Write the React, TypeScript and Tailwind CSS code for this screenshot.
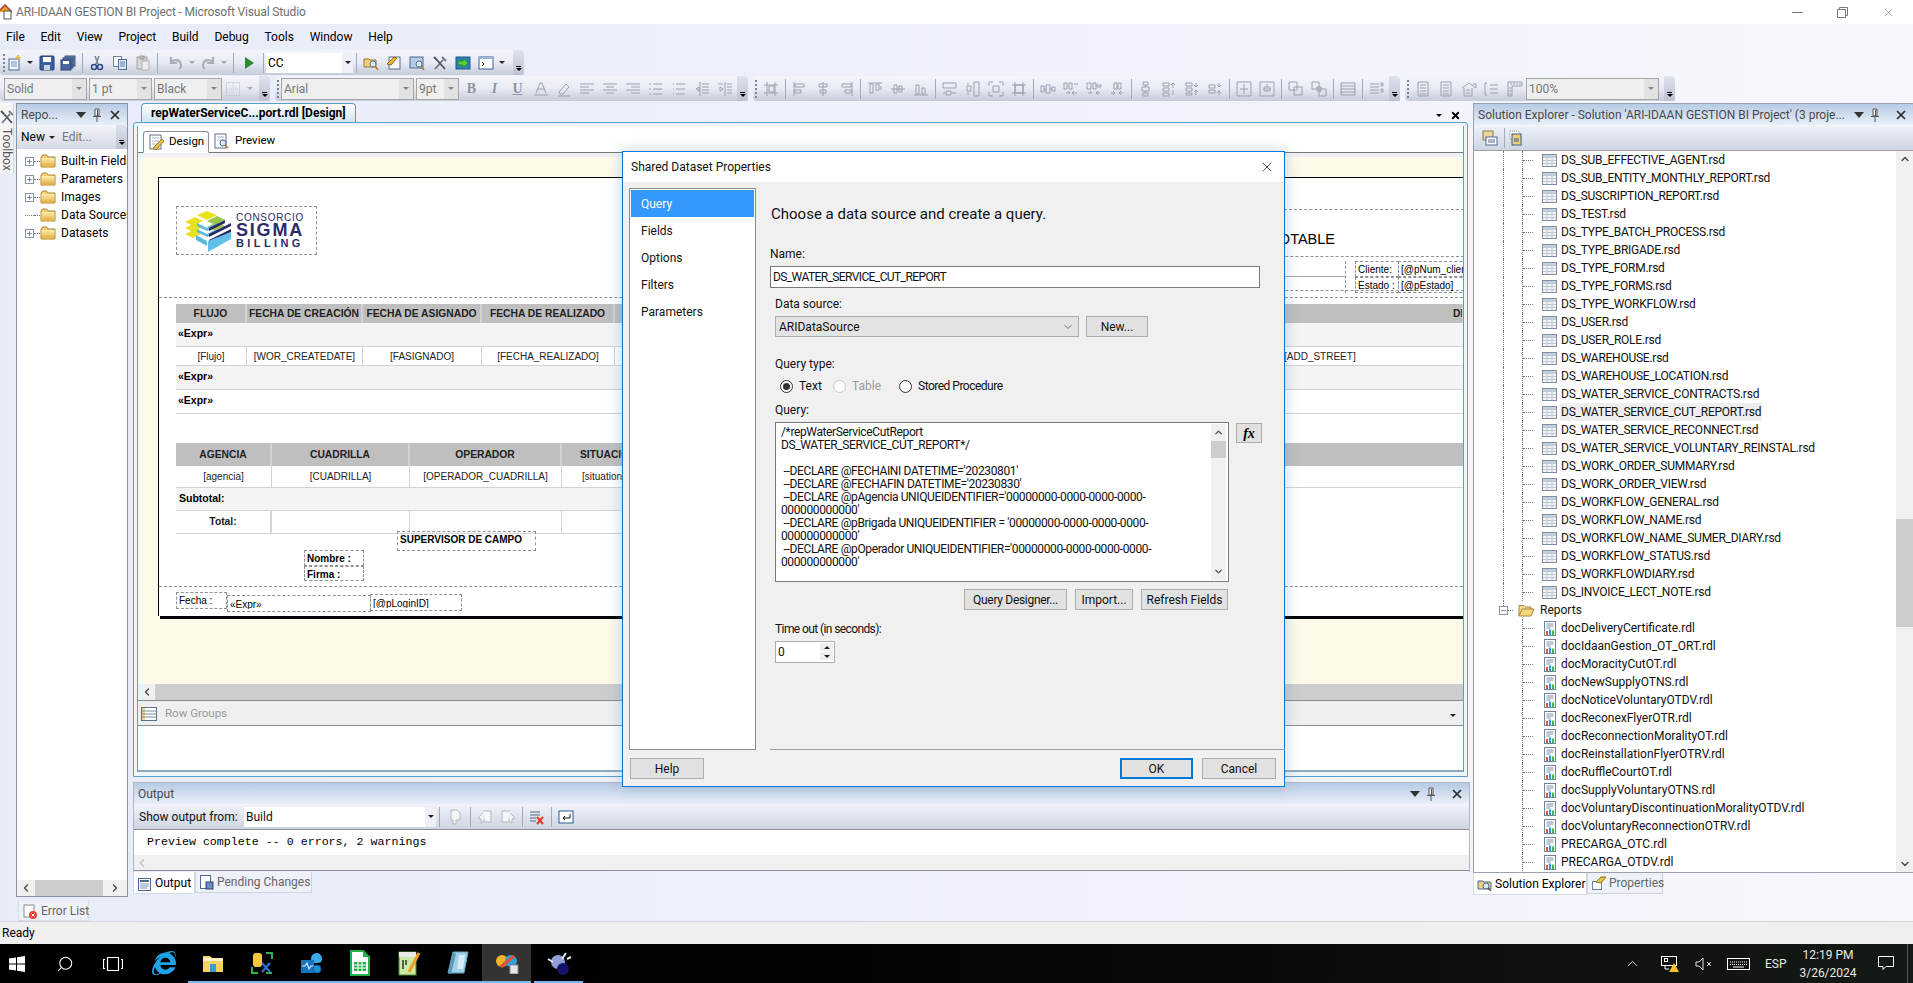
import type { ReactNode } from "react";
import { ChevronUp, ChevronDown, ChevronLeft, ChevronRight, Search, X, Minus, Plus } from "lucide-react";
import { FaInternetExplorer } from "react-icons/fa";

const ui = "font-['Roboto',Arial,sans-serif]";

// ---------- small drawings ----------
const Svg = ({ children, s = 16, w, h, c = "" }: { children: ReactNode; s?: number; w?: number; h?: number; c?: string }) => (
  <svg width={w ?? s} height={h ?? s} viewBox={`0 0 ${w ?? s} ${h ?? s}`} className={"shrink-0 " + c} fill="none">
    {children}
  </svg>
);

const Folder = () => (
  <Svg w={16} h={14}>
    <path d="M1 3.5 2.5 1h4L8 3h7v10H1z" fill="#f3cf72" stroke="#a8853a" />
    <rect x="1.5" y="4" width="13" height="9" fill="url(#fold)" />
    <defs>
      <linearGradient id="fold" x1="0" y1="0" x2="0" y2="1">
        <stop offset="0" stopColor="#fdeeb0" />
        <stop offset="1" stopColor="#e2ab3c" />
      </linearGradient>
    </defs>
  </Svg>
);

const OpenFolder = () => (
  <Svg w={17} h={13}>
    <path d="M1 12V1.5h5L7.5 3H13v2" stroke="#a8853a" fill="#f5dc98" />
    <path d="M1 12 4 5h12l-3 7z" fill="#f8d67c" stroke="#a8853a" />
  </Svg>
);

const RsdIcon = () => (
  <Svg w={15} h={13}>
    <rect x=".5" y=".5" width="14" height="12" fill="#f3f5f8" stroke="#7f8ea3" />
    <path d="M1 3.5h13M1 6.5h13M1 9.5h13M5 3v9M10 3v9" stroke="#bcc6d4" />
    <rect x="1" y="1" width="13" height="2" fill="#c6d1df" />
  </Svg>
);

const RdlIcon = () => (
  <Svg w={13} h={15}>
    <rect x=".5" y=".5" width="11" height="14" fill="#fff" stroke="#6d83a0" />
    <path d="M2.5 3h7M2.5 5h7M2.5 7h4" stroke="#7c8ea8" />
    <rect x="2" y="10" width="2" height="4" fill="#e8502f" />
    <rect x="5" y="8.500" width="2" height="5.500" fill="#2f9bd8" />
    <rect x="8" y="9.500" width="2" height="4.500" fill="#44b649" />
  </Svg>
);

const PlusBox = () => (
  <span className="flex h-[9px] w-[9px] shrink-0 items-center justify-center border border-[#8a94a6] bg-white">
    <Plus size={7} strokeWidth={2} className="text-[#27408b]" />
  </span>
);

const PinIcon = () => (
  <Svg w={10} h={14}>
    <path d="M3 1h4v7H3zM1 8.500h8M5 9v5M5.500 2v6" stroke="#555" fill="#f3f3f3" />
  </Svg>
);

const HeadX = () => <X size={14} strokeWidth={3} className="shrink-0 text-[#2c2c2c]" />;
const Tri = ({ c = "border-t-[#222]" }: { c?: string }) => (
  <span className={"inline-block h-0 w-0 border-x-[3px] border-t-[3px] border-x-transparent " + c} />
);
const BigTri = () => <span className="inline-block h-0 w-0 border-x-[5px] border-t-[6px] border-x-transparent border-t-[#333]" />;

// gray alignment glyphs of the layout toolbar
const grayPaths: Record<string, string> = {
  ulist1: "M1 3h2M1 8h2M1 13h2M5 3h9M5 8h9M5 13h9",
  ulist2: "M2 3h1M2 8h1M2 13h1M5 3h9M5 8h9M5 13h9",
  outdent: "M6 1v14M2 8l3-2v4zM8 3h7M8 6h7M8 9h7M8 12h7",
  indent: "M8 1v14M6 8 3 6v4zM1 3h5M10 3h5M10 6h5M10 9h5M10 12h5",
  grid: "M4 1v14M12 1v14M1 4h14M1 12h14M6 5h5v6H6z",
  left: "M2 1v14M3 3h9v3H3zM3 9h6v3H3z",
  center: "M8 1v14M4 3h8v3H4zM5 9h6v3H5z",
  right: "M14 1v14M4 3h9v3H4zM7 9h6v3H7z",
  top: "M1 2h14M3 3v9h3V3zM9 3v6h3V3zM14 5v4",
  middle: "M1 8h14M4 4h3v8H4zM9 5h3v6H9z",
  bottom: "M1 14h14M3 4v9h3V4zM9 7v6h3V7z",
  w1: "M1 2h13v5H1zM4 10h5v4H4zM1 12h2M10 12h4",
  w2: "M9 1h5v14H9zM2 5h4v5H2zM3 2v2M3 11v3",
  w3: "M1 1h4M11 1h4M1 15h4M11 15h4M1 1v4M15 1v4M1 11v4M15 11v4M5 5h6v6H5z",
  w4: "M4 1v14M12 1v14M1 4h14M1 12h14M4 4h8v8H4z",
  h1: "M1 5h3v6H1zM6 4h4v8H6zM12 6h3v4h-3zM4 8h2M10 8h2",
  h2: "M1 2h3v6H1zM6 2h3v6H6zM11 3h4M3 12h4l-2-2M9 12h5M11 10l-2 2 2 2",
  h3: "M1 2h4v6H1zM7 2h3v6H7zM11 4h4v2h-4zM2 12h4l-2-2M10 12h4M12 10l-2 2 2 2",
  h4: "M5 2h3v6H5zM9 2h3v6H9zM2 12h4M10 12h4M4 10l2 2-2 2M12 10l-2 2 2 2",
  v1: "M5 1h5v3H5zM4 6h7v4H4zM5 12h5v3H5zM7.500 4v2M7.500 10v2",
  v2: "M2 2h6v3H2zM2 7h6v3H2zM2 12h6v3H2zM12 2v5M10 4l2-2 2 2M12 9v5",
  v3: "M2 2h6v3H2zM2 7h6v3H2zM2 12h6v2H2zM12 2v4M10 4l2 2 2-2M12 9v5M10 11l2-2 2 2",
  v4: "M2 4h6v3H2zM2 9h6v3H2zM12 2v4M12 9v5M10 4l2 2 2-2M10 12l2-2 2 2",
  cw: "M1 1h14v14H1zM8 3v10M4 8h8",
  cv: "M1 1h14v14H1zM4 8h8M8 3v3M5 6h6v4H5z",
  front: "M1 1h8v8H1zM6 6h8v8H6z",
  back: "M1 1h7v7H1zM8 8h7v7H8zM6 6h4v4H6z",
  table: "M1 2h14v12H1zM1 5h14M1 8h14M1 11h14",
  tabs: "M1 3h9M1 6h9M1 9h9M1 12h9M12 2h2v3h-2zM12 8h2v3h-2z",
  doc: "M3 1h10v14H3zM5 4h6M5 7h6M5 10h6M5 13h6",
  house: "M1 7 8 2l7 5M3 7v8h8V7M5 9h4M5 12h4M12 3h3v4",
  bracket: "M3 2H1v12h2M6 4h8M6 8h8M6 12h8",
  ruler: "M1 1h14v4H5v10H1zM4 2v2M7 2v2M10 2v2M13 2v2M2 7h2M2 10h2M2 13h2",
  fontA: "M3 12 7 2h2l4 10M5 8h6M1 14h14",
  eraser: "M3 11 10 3l3 3-6 7H4zM2 15h12",
  aLeft: "M1 3h14M1 6h9M1 9h14M1 12h9",
  aCenter: "M1 3h14M4 6h8M1 9h14M4 12h8",
  aRight: "M1 3h14M6 6h9M1 9h14M6 12h9",
};

const Gray = ({ n, c = "#9aa1ae" }: { n: string; c?: string }) => (
  <Svg>
    <path d={grayPaths[n]} stroke={c} />
  </Svg>
);

// ---------- toolbar bits ----------
const Btn = ({ children, w = "w-[23px]" }: { children: ReactNode; w?: string }) => (
  <span className={"flex h-full shrink-0 items-center justify-center " + w}>{children}</span>
);
const G = ({ n }: { n: string }) => (
  <Btn>
    <Gray n={n} />
  </Btn>
);
const Sep = () => (
  <span className="flex h-full w-[6px] shrink-0 items-center justify-center">
    <span className="h-[20px] w-px bg-[#a3a9b7]" />
  </span>
);
const Grip = () => (
  <span className="flex h-full w-[6px] shrink-0 flex-col items-center justify-center gap-[2px]">
    {[0, 1, 2, 3, 4].map((i) => (
      <span key={i} className="h-[2px] w-[2px] bg-[#7b8294]" />
    ))}
  </span>
);
const Overflow = () => (
  <span className="ml-auto flex h-full w-[11px] shrink-0 flex-col items-center justify-end gap-[1px] rounded-r bg-gradient-to-b from-[#dfe3ee] to-[#bcc2d2] pb-[4px]">
    <span className="h-px w-[5px] bg-black" />
    <Tri c="border-t-black" />
  </span>
);
const Band = ({ children, w }: { children: ReactNode; w: string }) => (
  <div className={"flex h-full shrink-0 items-center rounded-l-sm bg-gradient-to-b from-[#f3f5fb] via-[#e8ebf4] to-[#c6cbda] " + w}>{children}</div>
);
const Combo = ({ text, w, arrow = "w-[14px]" }: { text: string; w: string; arrow?: string }) => (
  <span className={"flex h-[22px] shrink-0 items-center justify-between border border-[#a6a6a6] bg-[#efefef] pl-[2px] text-[12px] text-[#777] " + w}>
    {text}
    <span className={"flex h-full items-center justify-center bg-[#e2e2e2] " + arrow}>
      <Tri c="border-t-[#888]" />
    </span>
  </span>
);

// ---------- colored toolbar icons ----------
const NewProj = () => (
  <Svg>
    <rect x="2" y="4" width="10" height="11" fill="#eef3fa" stroke="#4d6a94" />
    <path d="M4 7h6M4 9h6M4 11h6" stroke="#7b93b5" />
    <path d="M11 0v5M8.500 2.500h5" stroke="#f0b429" strokeWidth="1.500" />
  </Svg>
);
const Save = () => (
  <Svg>
    <rect x="1" y="1" width="14" height="14" rx="1" fill="#3d5e9f" stroke="#243c70" />
    <rect x="4" y="2" width="8" height="5" fill="#fff" />
    <rect x="5" y="10" width="6" height="5" fill="#c9d3e6" />
  </Svg>
);
const SaveAll = () => (
  <Svg>
    <rect x="5" y="1" width="10" height="10" fill="#6d82ad" stroke="#3c5080" />
    <rect x="3" y="3" width="10" height="10" fill="#58719f" stroke="#3c5080" />
    <rect x="1" y="5" width="10" height="10" fill="#4a659c" stroke="#2c4478" />
    <rect x="3" y="6" width="6" height="3" fill="#fff" />
  </Svg>
);
const Cut = () => (
  <Svg>
    <path d="M6 1l3 8M10 1 7 9" stroke="#7a8190" strokeWidth="1.500" />
    <circle cx="5" cy="12" r="2.500" stroke="#2a4a8a" strokeWidth="1.500" />
    <circle cx="11" cy="12" r="2.500" stroke="#2a4a8a" strokeWidth="1.500" />
  </Svg>
);
const Copy = () => (
  <Svg>
    <rect x="1.500" y="1.500" width="8" height="10" fill="#fff" stroke="#6e84a6" />
    <rect x="6.500" y="4.500" width="8" height="10" fill="#dbe6f5" stroke="#4e6f9e" />
    <path d="M8 7h5M8 9h5M8 11h5" stroke="#5d83bb" />
  </Svg>
);
const Paste = () => (
  <Svg>
    <rect x="2" y="2" width="10" height="12" fill="#d7d7d7" stroke="#a3a3a3" />
    <rect x="5" y="1" width="4" height="3" fill="#c4c4c4" stroke="#9a9a9a" />
    <rect x="7" y="6" width="7" height="9" fill="#ededed" stroke="#b0b0b0" />
  </Svg>
);
const Undo = ({ flip = false }: { flip?: boolean }) => (
  <Svg c={flip ? "-scale-x-100" : ""}>
    <path d="M3 2v6h6M3.500 8C6 3.500 12 4 13 10c.3 1.500-.5 3-1.500 4" stroke="#a9aeb9" strokeWidth="2.200" />
  </Svg>
);
const Find = ({ v }: { v: number }) => (
  <Svg>
    {v === 0 && <path d="M1 4h5l1 1h6v7H1z" fill="#f0cf7c" stroke="#97793a" />}
    {v === 1 && <rect x="3" y="2" width="11" height="12" fill="#f5f7fb" stroke="#5c6f8c" />}
    {v === 1 && <path d="M1 9 8 2l3 1-6 7z" fill="#e9b83f" stroke="#8d6d1e" />}
    {v === 2 && <rect x="1" y="2" width="13" height="11" fill="#b7cbe3" stroke="#4d6a94" />}
    {v === 0 || v === 2 ? <circle cx="10" cy="9" r="3" fill="#d8ebf7" stroke="#5c6f8c" /> : null}
    {v === 0 || v === 2 ? <path d="m12 11 3 4" stroke="#b77f2b" strokeWidth="1.500" /> : null}
  </Svg>
);
const Tools = () => (
  <Svg>
    <path d="M3 14 11 5M10 2l4 4" stroke="#6e7684" strokeWidth="1.800" />
    <path d="M13 14 5 5M2 2l3 3" stroke="#4a5260" strokeWidth="1.800" />
  </Svg>
);
const Attach = () => (
  <Svg>
    <rect x="1" y="2" width="14" height="12" fill="#2f7fb5" stroke="#1f5b87" />
    <path d="M3 6h5V3l5 5-5 5v-3H3z" fill="#54d13b" stroke="#2b8a1d" />
  </Svg>
);
const Cmd = () => (
  <Svg>
    <rect x="1" y="2" width="14" height="12" fill="#fff" stroke="#3f5f92" />
    <rect x="1" y="2" width="14" height="2" fill="#9db5d9" />
    <path d="m4 7 2 2-2 2" stroke="#222" />
  </Svg>
);

// ---------- panel header ----------
const PanelHead = ({ title, compact = false }: { title: string; compact?: boolean }) => (
  <div className="flex h-[21px] shrink-0 items-center gap-[6px] bg-gradient-to-b from-[#b7cbe4] to-[#e9eff8] pl-[4px] pr-[5px] text-[12px] text-[#4a4a4a]">
    <span className="min-w-0 flex-1 truncate">{title}</span>
    <BigTri />
    <PinIcon />
    {!compact && <span className="w-[2px]" />}
    <HeadX />
  </div>
);

// ---------- left: report data ----------
const dataTree = [
  { t: "Built-in Fields", plus: true },
  { t: "Parameters", plus: true },
  { t: "Images", plus: true },
  { t: "Data Sources", plus: false },
  { t: "Datasets", plus: true },
];

const ReportData = () => (
  <div className="flex h-[794px] w-[112px] shrink-0 flex-col border border-[#8b93a3] bg-white">
    <PanelHead title="Repo..." compact />
    <div className="flex h-[24px] shrink-0 items-center gap-[4px] bg-gradient-to-b from-[#f3f5fb] to-[#d5d9e5] pl-[4px] text-[12px]">
      <span>New</span>
      <Tri />
      <span className="ml-[3px] text-[#777]">Edit...</span>
      <Overflow />
    </div>
    <div className="min-h-0 flex-1 overflow-hidden pt-[3px]">
      {dataTree.map((d) => (
        <div key={d.t} className="flex h-[18px] items-center whitespace-nowrap text-[12px]">
          <span className="ml-[8px] w-[9px] shrink-0">{d.plus ? <PlusBox /> : <span className="block w-[9px] border-t border-dotted border-[#777]" />}</span>
          <span className="w-[6px] shrink-0 border-t border-dotted border-[#777]" />
          <Folder />
          <span className="ml-[5px]">{d.t}</span>
        </div>
      ))}
    </div>
    <div className="flex h-[16px] shrink-0 items-center bg-[#f0f0f0]">
      <span className="flex w-[18px] justify-center">
        <ChevronLeft size={12} strokeWidth={3} className="text-[#505050]" />
      </span>
      <span className="h-full flex-1 bg-[#cdcdcd]" />
      <span className="flex w-[24px] justify-center">
        <ChevronRight size={12} strokeWidth={3} className="text-[#505050]" />
      </span>
    </div>
  </div>
);

// ---------- report page ----------
const Box = ({ c, children }: { c: string; children: ReactNode }) => (
  <div className={"absolute overflow-hidden whitespace-nowrap border border-dashed border-[#8f8f8f] px-[2px] font-['Liberation_Sans'] text-[10px] text-black " + c}>{children}</div>
);

const Th = ({ children, c = "" }: { children?: ReactNode; c?: string }) => (
  <div className={"flex items-center justify-center overflow-hidden whitespace-nowrap border-r-2 border-[#d3d3d3] text-[10.300px] font-bold text-[#222] " + c}>{children}</div>
);
const Td = ({ children, c = "" }: { children?: ReactNode; c?: string }) => (
  <div className={"flex items-center justify-center overflow-hidden whitespace-nowrap border-r border-[#d3d3d3] text-[10px] text-[#222] " + c}>{children}</div>
);
const ExprRow = ({ bg, text }: { bg: string; text: string }) => (
  <div className={"flex h-[24px] items-center border-b border-[#d3d3d3] pb-px pl-[2px] text-[10.500px] font-bold " + bg}>{text}</div>
);

const Logo = () => (
  <div className="flex items-center gap-[3px]">
    <Svg w={50} h={42}>
      <path d="M2 12 12 7l8 4-10 5zM2 18l10-5 8 4-10 5zM2 24l10-5 8 4-10 5z" fill="#e8e21e" />
      <path d="M14 5 24 1l10 4-10 5z" fill="#e8e21e" />
      <path d="M24 11l10-5 8 4-10 5zM24 17l10-5 8 4-10 5z" fill="#9dc54b" />
      <path d="M14 13l10 5 10-5v3l-10 5-10-5zM14 19l10 5 10-5v3l-10 5-10-5z" fill="#5ab7e0" />
      <path d="M26 18l16-8v3l-16 8zM26 24l22-11v3L26 27zM26 30l22-11v3L26 33z" fill="#282a63" />
      <path d="M25 31 48 22v7L25 42z" fill="#62c0e8" />
      <path d="M13 25l11 6v5l-11-6z" fill="#5ab7e0" />
    </Svg>
    <div className="flex flex-col items-start font-['Liberation_Sans'] text-[#2c2d68]">
      <span className="h-[10px] text-[10px] leading-[10px] tracking-[0.7px]">CONSORCIO</span>
      <span className="h-[15px] text-[18px] font-bold leading-[15px] tracking-[1.8px]">SIGMA</span>
      <span className="h-[11px] text-[11px] font-bold leading-[11px] tracking-[3.4px]">BILLING</span>
    </div>
  </div>
);

const ReportPage = () => (
  <div className="relative h-[439px] w-[1340px] shrink-0 border-l border-t border-black bg-white font-['Liberation_Sans'] shadow-[2px_3px_0_#000]">
    <div className="relative h-[120px] border-b border-dashed border-[#8f8f8f]">
      <div className="absolute left-[17px] top-[28px] flex h-[49px] w-[141px] items-center border border-dashed border-[#8f8f8f] pl-[6px]">
        <Logo />
      </div>
      <div className="absolute left-[1125px] top-[31px] h-[48px] w-[190px] border-t border-dashed border-[#8f8f8f]" />
      <div className="absolute left-[800px] top-[51px] w-[376px] whitespace-nowrap text-right text-[14.500px] text-black">AGUA POTABLE</div>
      <div className="absolute left-[700px] top-[78px] h-[35px] w-[620px] border-y border-dashed border-[#8f8f8f]" />
      <div className="absolute left-[700px] top-[83px] h-[32px] w-[487px] border-r border-dashed border-[#8f8f8f]">
        <div className="h-[16px] border-b border-[#a5a5a5]" />
      </div>
      <Box c="left-[1196px] top-[83px] h-[16px] w-[44px] text-[#1a1a1a]">Cliente:</Box>
      <Box c="left-[1196px] top-[99px] h-[16px] w-[44px] text-[#1a1a1a]">Estado :</Box>
      <Box c="left-[1239px] top-[83px] h-[16px] w-[90px]">[@pNum_client]</Box>
      <Box c="left-[1239px] top-[99px] h-[16px] w-[90px]">[@pEstado]</Box>
    </div>

    <div className="relative h-[289px] border-b border-dashed border-[#8f8f8f] pl-[17px] pt-[6px]">
      <div className="grid h-[19px] grid-cols-[71px_116px_119px_133px_669px_180px] bg-[#bfbfbf]">
        <Th>FLUJO</Th>
        <Th>FECHA DE CREACIÓN</Th>
        <Th>FECHA DE ASIGNADO</Th>
        <Th>FECHA DE REALIZADO</Th>
        <Th />
        <Th c="justify-start pl-[169px]">DIRECCIÓN</Th>
      </div>
      <ExprRow bg="bg-[#f4f4f4]" text="«Expr»" />
      <div className="grid h-[19px] grid-cols-[71px_116px_119px_133px_669px_180px] border-b border-[#d3d3d3]">
        <Td>[Flujo]</Td>
        <Td>[WOR_CREATEDATE]</Td>
        <Td>[FASIGNADO]</Td>
        <Td>[FECHA_REALIZADO]</Td>
        <Td />
        <Td c="justify-start">[ADD_STREET]</Td>
      </div>
      <ExprRow bg="bg-[#f4f4f4]" text="«Expr»" />
      <ExprRow bg="bg-white" text="«Expr»" />

      <div className="mt-[29px] grid h-[23px] grid-cols-[96px_138px_152px_200px] bg-[#bfbfbf]">
        <Th>AGENCIA</Th>
        <Th>CUADRILLA</Th>
        <Th>OPERADOR</Th>
        <Th c="justify-start pl-[18px]">SITUACIÓN</Th>
      </div>
      <div className="grid h-[22px] grid-cols-[96px_138px_152px_200px] border-b border-[#d3d3d3]">
        <Td>[agencia]</Td>
        <Td>[CUADRILLA]</Td>
        <Td>[OPERADOR_CUADRILLA]</Td>
        <Td c="justify-start pl-[20px]">[situation]</Td>
      </div>
      <div className="flex h-[23px] w-[586px] items-center border-b border-[#d3d3d3] bg-[#f4f4f4] pl-[3px] text-[10.500px] font-bold">Subtotal:</div>
      <div className="grid h-[23px] w-[586px] grid-cols-[96px_138px_152px_200px] border-b border-[#d3d3d3]">
        <Th c="border-r border-[#d3d3d3]">Total:</Th>
        <Td />
        <Td />
        <Td />
      </div>

      <Box c="left-[238px] top-[233px] h-[20px] w-[139px] text-[9.500px] font-bold">SUPERVISOR DE CAMPO</Box>
      <Box c="left-[145px] top-[252px] h-[16px] w-[60px] font-bold">Nombre :</Box>
      <Box c="left-[145px] top-[268px] h-[15px] w-[60px] font-bold">Firma :</Box>
    </div>

    <div className="relative h-[27px]">
      <Box c="left-[17px] top-[5px] h-[17px] w-[51px]">Fecha :</Box>
      <Box c="left-[68px] top-[8px] h-[17px] w-[144px]">
        <div className="mt-[3px] h-[10px] overflow-hidden leading-[12px]">«Expr»</div>
      </Box>
      <Box c="left-[211px] top-[7px] h-[17px] w-[92px]">
        <div className="mt-[3px] h-[10px] overflow-hidden leading-[12px]">[@pLoginID]</div>
      </Box>
    </div>
  </div>
);

// ---------- centre: document ----------
const DesignIcon = () => (
  <Svg>
    <rect x="2" y="1" width="11" height="14" fill="#fff" stroke="#5c6f8c" />
    <path d="M4 4h7M4 7h7M4 10h7" stroke="#9db1cc" />
    <path d="M5 14 14 5l2 2-8 9z" fill="#e8c14a" stroke="#9b7a1c" />
  </Svg>
);
const PreviewIcon = () => (
  <Svg>
    <rect x="2" y="1" width="11" height="14" fill="#fff" stroke="#5c6f8c" />
    <path d="M4 4h7M4 7h7" stroke="#9db1cc" />
    <circle cx="10" cy="10" r="3" fill="#d5ebf9" stroke="#4d6a94" />
    <path d="m12 12 3 3" stroke="#b77f2b" strokeWidth="1.500" />
  </Svg>
);

const DocumentArea = () => (
  <div className="flex h-[674px] shrink-0 flex-col">
    <div className="flex h-[19px] shrink-0 items-end">
      <div className="ml-[8px] flex h-[19px] w-[215px] items-center whitespace-nowrap rounded-t-[4px] border border-b-0 border-[#5c9dc9] bg-gradient-to-b from-white to-[#cfe4f4] pl-[9px] text-[12px] font-bold text-black">repWaterServiceC...port.rdl [Design]</div>
      <div className="ml-auto flex items-center gap-[8px] pb-[1px] pr-[12px]">
        <Tri c="border-t-black" />
        <X size={11} strokeWidth={4} className="text-black" />
      </div>
    </div>
    <div className="flex min-h-0 w-[1335px] flex-1 flex-col rounded-t-[3px] border border-[#5c9dc9] bg-[#eef5fa] px-[3px] pb-[4px] pt-[3px]">
      <div className="flex min-h-0 flex-1 flex-col border-x border-[#5c9dc9] bg-white">
        <div className="flex h-[27px] shrink-0 items-end border-b border-[#777] pl-[5px] text-[11.500px]">
          <div className="-mb-px flex h-[22px] w-[66px] items-center gap-[5px] rounded-t-[3px] border border-b-white border-[#8f8f8f] bg-white pl-[4px]">
            <DesignIcon />
            Design
          </div>
          <div className="flex h-[22px] items-center gap-[6px] pl-[4px]">
            <PreviewIcon />
            Preview
          </div>
        </div>
        <div className="h-[4px] shrink-0 bg-[#f0f0f0]" />
        <div className="flex min-h-0 flex-1 items-start overflow-hidden bg-[#fefaea] pl-[20px] pt-[20px]">
          <ReportPage />
        </div>
        <div className="flex h-[16px] shrink-0 items-center bg-[#cdcdcd]">
          <span className="flex h-full w-[17px] items-center justify-center bg-[#f0f0f0]">
            <ChevronLeft size={12} strokeWidth={3} className="text-[#505050]" />
          </span>
        </div>
        <div className="flex h-[26px] shrink-0 items-center gap-[8px] border-y border-[#8b8b8b] bg-[#efefef] pl-[3px] pt-[2px] text-[11.500px] text-[#999]">
          <Svg>
            <rect x=".5" y="1.500" width="15" height="13" fill="#fff" stroke="#5c6f8c" />
            <rect x="1" y="2" width="3" height="12" fill="#f0d48a" />
            <path d="M1 5h14M1 8h14M1 11h14" stroke="#7d8ea8" />
          </Svg>
          Row Groups
          <span className="ml-auto pr-[7px]">
            <Tri />
          </span>
        </div>
        <div className="h-[46px] shrink-0 border-b-2 border-[#8fa9bd] bg-white" />
      </div>
    </div>
  </div>
);

const TabBtn = ({ active, icon, text, w }: { active?: boolean; icon: ReactNode; text: string; w: string }) => (
  <div className={"flex items-center gap-[2px] whitespace-nowrap border border-t-0 pl-[3px] text-[12px] " + w + (active ? " h-[22px] border-[#d6dae3] bg-white text-black" : " h-[21px] border-[#cfd3dc] bg-[#eef1f8] text-[#666]")}>
    {icon}
    {text}
  </div>
);

const OutputPanel = () => (
  <div className="mt-[5px] flex h-[114px] w-[1337px] shrink-0 flex-col">
    <div className="flex min-h-0 flex-1 flex-col border-x border-t border-[#b0b6c2] border-b-[#8b8b8b]">
      <PanelHead title="Output" />
      <div className="flex h-[26px] shrink-0 items-center border-b border-[#8e8e8e] bg-gradient-to-b from-[#f0f3fa] to-[#cfd4e2] pl-[5px] text-[12px] text-[#111]">
        <span className="w-[105px]">Show output from:</span>
        <span className="flex h-[20px] w-[192px] items-center justify-between bg-white pl-[2px]">
          Build
          <span className="flex h-full w-[11px] items-center justify-center bg-[#eef0f6]">
            <Tri />
          </span>
        </span>
        <Sep />
        <Btn w="w-[25px]">
          <Svg>
            <path d="M4 1h6l3 3v7H9v4H6v-4H4z" stroke="#b3b8c3" fill="#f4f5f8" />
          </Svg>
        </Btn>
        <Sep />
        <Btn>
          <Svg>
            <path d="M6 2h8v11H6M6 4 1 9l3 1v4l4-3" stroke="#b3b8c3" fill="#f4f5f8" />
          </Svg>
        </Btn>
        <Btn>
          <Svg>
            <path d="M10 2H2v11h8M10 4l5 5-3 1v4l-4-3" stroke="#b3b8c3" fill="#f4f5f8" />
          </Svg>
        </Btn>
        <Sep />
        <Btn>
          <Svg>
            <path d="M1 3h10M1 6h10M1 9h6M1 12h6" stroke="#54698a" />
            <path d="m8 8 6 7M14 8l-6 7" stroke="#e23a2e" strokeWidth="2" />
          </Svg>
        </Btn>
        <Sep />
        <Btn>
          <Svg>
            <rect x="1" y="2" width="14" height="12" fill="#fff" stroke="#2c5b96" />
            <path d="M12 5v4H5M7 7 5 9l2 2" stroke="#111" />
          </Svg>
        </Btn>
      </div>
      <div className="h-[25px] shrink-0 bg-white pl-[13px] pt-[3px] font-['Liberation_Mono'] text-[11.650px] text-black">Preview complete -- 0 errors, 2 warnings</div>
      <div className="flex h-[16px] shrink-0 items-center border-b border-[#8e8e8e] bg-[#f0f0f0] pl-[2px]">
        <ChevronLeft size={12} strokeWidth={3} className="text-[#c2c2c2]" />
      </div>
    </div>
    <div className="flex h-[24px] shrink-0 items-start">
      <TabBtn
        active
        w="w-[62px]"
        text="Output"
        icon={
          <Svg c="mt-[3px]">
            <rect x="1.500" y="2.500" width="12" height="12" fill="#fff" stroke="#4d6a94" />
            <path d="M3 5h9" stroke="#4d6a94" strokeWidth="2" />
            <path d="M3 8h9M3 10h9M3 12h7" stroke="#7b93b5" />
          </Svg>
        }
      />
      <TabBtn
        w="w-[117px]"
        text="Pending Changes"
        icon={
          <Svg>
            <rect x="1.500" y="1.500" width="10" height="13" fill="#fff" stroke="#4d6a94" />
            <rect x="7" y="8" width="7" height="7" fill="#6e8db9" stroke="#2c4478" />
          </Svg>
        }
      />
    </div>
  </div>
);

// ---------- right: solution explorer ----------
const rsdRows = [
  "DS_SUB_EFFECTIVE_AGENT.rsd",
  "DS_SUB_ENTITY_MONTHLY_REPORT.rsd",
  "DS_SUSCRIPTION_REPORT.rsd",
  "DS_TEST.rsd",
  "DS_TYPE_BATCH_PROCESS.rsd",
  "DS_TYPE_BRIGADE.rsd",
  "DS_TYPE_FORM.rsd",
  "DS_TYPE_FORMS.rsd",
  "DS_TYPE_WORKFLOW.rsd",
  "DS_USER.rsd",
  "DS_USER_ROLE.rsd",
  "DS_WAREHOUSE.rsd",
  "DS_WAREHOUSE_LOCATION.rsd",
  "DS_WATER_SERVICE_CONTRACTS.rsd",
  "DS_WATER_SERVICE_CUT_REPORT.rsd",
  "DS_WATER_SERVICE_RECONNECT.rsd",
  "DS_WATER_SERVICE_VOLUNTARY_REINSTAL.rsd",
  "DS_WORK_ORDER_SUMMARY.rsd",
  "DS_WORK_ORDER_VIEW.rsd",
  "DS_WORKFLOW_GENERAL.rsd",
  "DS_WORKFLOW_NAME.rsd",
  "DS_WORKFLOW_NAME_SUMER_DIARY.rsd",
  "DS_WORKFLOW_STATUS.rsd",
  "DS_WORKFLOWDIARY.rsd",
  "DS_INVOICE_LECT_NOTE.rsd",
];
const rdlRows = [
  "docDeliveryCertificate.rdl",
  "docIdaanGestion_OT_ORT.rdl",
  "docMoracityCutOT.rdl",
  "docNewSupplyOTNS.rdl",
  "docNoticeVoluntaryOTDV.rdl",
  "docReconexFlyerOTR.rdl",
  "docReconnectionMoralityOT.rdl",
  "docReinstallationFlyerOTRV.rdl",
  "docRuffleCourtOT.rdl",
  "docSupplyVoluntaryOTNS.rdl",
  "docVoluntaryDiscontinuationMoralityOTDV.rdl",
  "docVoluntaryReconnectionOTRV.rdl",
  "PRECARGA_OTC.rdl",
  "PRECARGA_OTDV.rdl",
];

const FileRow = ({ name, rsd }: { name: string; rsd: boolean }) => (
  <div className="flex h-[18px] items-center whitespace-nowrap text-[12px] text-[#111]">
    <span className={"ml-[29px] h-full w-[19px] shrink-0 border-l border-dotted " + (rsd ? "border-[#777]" : "border-transparent")} />
    <span className="h-full w-px shrink-0 border-l border-dotted border-[#777]" />
    <span className="w-[10px] shrink-0 border-t border-dotted border-[#777]" />
    <span className="flex w-[24px] shrink-0 justify-end">{rsd ? <RsdIcon /> : <RdlIcon />}</span>
    <span className={"ml-[3px] px-[1px] " + (rsd ? "tracking-[-0.25px] " : "") + (name === "DS_WATER_SERVICE_CUT_REPORT.rsd" ? "bg-[#eeeeee]" : "")}>{name}</span>
  </div>
);

const SolutionExplorer = () => (
  <div className="flex w-[440px] shrink-0 flex-col">
    <div className="flex h-[770px] shrink-0 flex-col border-y border-l border-[#9aa2b0]">
      <PanelHead title="Solution Explorer - Solution 'ARI-IDAAN GESTION BI Project' (3 proje..." />
      <div className="flex h-[26px] shrink-0 items-center border-b border-[#a0a0a0] bg-gradient-to-b from-[#f0f3fa] to-[#cfd4e2] pl-[5px]">
        <Btn w="w-[22px]">
          <Svg>
            <rect x="1" y="1" width="10" height="9" fill="#e9d79f" stroke="#8d7a40" />
            <rect x="4" y="7" width="11" height="8" fill="#fff" stroke="#4d6a94" />
            <path d="M6 10h7M6 12h7" stroke="#4d6a94" />
          </Svg>
        </Btn>
        <Sep />
        <Btn w="w-[18px]">
          <Svg>
            <path d="M2 1h8l3 3v5H2z" fill="#fff" stroke="#999" strokeDasharray="1 1" />
            <rect x="4" y="4" width="9" height="11" fill="#f2cf66" stroke="#2f5f9e" />
            <path d="M6 9h5M6 11h5" stroke="#2f5f9e" />
          </Svg>
        </Btn>
      </div>
      <div className="flex min-h-0 flex-1 bg-white">
        <div className="min-w-0 flex-1 overflow-hidden">
          {rsdRows.map((r) => (
            <FileRow key={r} name={r} rsd />
          ))}
          <div className="relative flex h-[18px] items-center whitespace-nowrap text-[12px] text-[#111]">
            <span className="ml-[25px] flex h-[9px] w-[9px] items-center justify-center border border-[#8a94a6] bg-white">
              <Minus size={7} strokeWidth={2} className="text-[#27408b]" />
            </span>
            <span className="w-[5px] border-t border-dotted border-[#777]" />
            <span className="ml-[5px]">
              <OpenFolder />
            </span>
            <span className="ml-[5px]">Reports</span>
            <span className="absolute left-[29px] top-0 h-[5px] border-l border-dotted border-[#777]" />
          </div>
          {rdlRows.map((r) => (
            <FileRow key={r} name={r} rsd={false} />
          ))}
        </div>
        <div className="flex w-[17px] shrink-0 flex-col bg-[#f0f0f0]">
          <span className="flex h-[16px] items-center justify-center">
            <ChevronUp size={12} strokeWidth={3} className="text-[#505050]" />
          </span>
          <span className="flex-1" />
          <span className="h-[108px] bg-[#cdcdcd]" />
          <span className="h-[229px]" />
          <span className="flex h-[16px] items-center justify-center">
            <ChevronDown size={12} strokeWidth={3} className="text-[#505050]" />
          </span>
        </div>
      </div>
    </div>
    <div className="flex h-[24px] shrink-0 items-start">
      <TabBtn
        active
        w="w-[114px]"
        text="Solution Explorer"
        icon={
          <Svg>
            <path d="M1 5h5l1 1h7v7H1z" fill="#f0cf7c" stroke="#4d6a94" />
            <circle cx="9" cy="10" r="3" fill="#d5ebf9" stroke="#4d6a94" />
            <path d="m11 12 3 3" stroke="#555" strokeWidth="1.500" />
          </Svg>
        }
      />
      <TabBtn
        w="w-[76px]"
        text="Properties"
        icon={
          <Svg>
            <rect x="1.500" y="6.500" width="9" height="8" fill="#fff" stroke="#6e84a6" />
            <path d="M5 7 10 2h5l-5 6z" fill="#e8c14a" stroke="#86701f" />
          </Svg>
        }
      />
    </div>
  </div>
);

// ---------- dialog ----------
const queryLines = [
  "/*repWaterServiceCutReport",
  "DS_WATER_SERVICE_CUT_REPORT*/",
  "",
  " --DECLARE @FECHAINI DATETIME='20230801'",
  " --DECLARE @FECHAFIN DATETIME='20230830'",
  " --DECLARE @pAgencia UNIQUEIDENTIFIER='00000000-0000-0000-0000-",
  "000000000000'",
  " --DECLARE @pBrigada UNIQUEIDENTIFIER = '00000000-0000-0000-0000-",
  "000000000000'",
  " --DECLARE @pOperador UNIQUEIDENTIFIER='00000000-0000-0000-0000-",
  "000000000000'",
];

const WinBtn = ({ children, c }: { children: ReactNode; c: string }) => (
  <button className={"flex h-[21px] items-center justify-center border border-[#adadad] bg-[#e1e1e1] text-[12px] text-[#111] " + c}>{children}</button>
);
const Radio = ({ on = false, off = false }: { on?: boolean; off?: boolean }) => (
  <span className={"flex h-[13px] w-[13px] items-center justify-center rounded-full border bg-white " + (off ? "border-[#c9c9c9]" : "border-[#333]")}>
    {on && <span className="h-[7px] w-[7px] rounded-full bg-[#333]" />}
  </span>
);

const Dialog = () => (
  <div className="absolute left-[622px] top-[151px] z-10 flex h-[636px] w-[663px] flex-col border border-[#0078d7] bg-[#f0f0f0] text-[12px] text-[#111] shadow-[0_0_14px_rgba(90,130,170,0.35)]">
    <div className="flex h-[30px] shrink-0 items-center justify-between bg-white pl-[8px] pr-[9px]">
      Shared Dataset Properties
      <X size={16} strokeWidth={1.2} className="text-[#222]" />
    </div>
    <div className="flex min-h-0 flex-1 pl-[6px]">
      <div className="mt-[6px] w-[127px] shrink-0 border border-[#8b8b8b] bg-white p-px">
        {["Query", "Fields", "Options", "Filters", "Parameters"].map((m, i) => (
          <div key={m} className={"flex h-[27px] items-center pl-[10px] " + (i === 0 ? "bg-[#3399ff] text-white" : "")}>
            {m}
          </div>
        ))}
      </div>
      <div className="ml-[14px] flex w-[507px] shrink-0 flex-col">
        <div className="ml-px mt-[22px] h-[20px] text-[15px] leading-[20px]">Choose a data source and create a query.</div>
        <div className="mt-[23px] h-[14px] leading-[14px]">Name:</div>
        <div className="mt-[5px] flex h-[22px] w-[490px] items-center border border-[#7a7a7a] bg-white pl-[2px] tracking-[-0.6px]">DS_WATER_SERVICE_CUT_REPORT</div>
        <div className="ml-[5px] mt-[9px] h-[14px] leading-[14px]">Data source:</div>
        <div className="ml-[5px] mt-[5px] flex items-center gap-[7px]">
          <div className="flex h-[21px] w-[304px] items-center justify-between border border-[#adadad] bg-[#e3e3e3] pl-[3px] pr-[4px]">
            ARIDataSource
            <ChevronDown size={12} strokeWidth={1.5} className="text-[#444]" />
          </div>
          <WinBtn c="w-[62px]">New...</WinBtn>
        </div>
        <div className="ml-[5px] mt-[20px] h-[14px] leading-[14px]">Query type:</div>
        <div className="ml-[10px] mt-[8px] flex h-[14px] items-center">
          <Radio on />
          <span className="ml-[6px] w-[34px]">Text</span>
          <Radio off />
          <span className="ml-[6px] w-[47px] text-[#9b9b9b]">Table</span>
          <Radio />
          <span className="ml-[6px] tracking-[-0.5px]">Stored Procedure</span>
        </div>
        <div className="ml-[5px] mt-[10px] h-[14px] leading-[14px]">Query:</div>
        <div className="ml-[5px] mt-[5px] flex items-start gap-[7px]">
          <div className="flex h-[160px] w-[454px] border border-[#7a7a7a] bg-white">
            <div className="min-w-0 flex-1 overflow-hidden pl-[5px] pt-[3px] tracking-[-0.37px]">
              {queryLines.map((l, i) => (
                <div key={i} className="h-[13px] whitespace-pre leading-[13px]">
                  {l}
                </div>
              ))}
            </div>
            <div className="my-px mr-[2px] flex w-[15px] shrink-0 flex-col bg-[#f0f0f0]">
              <span className="flex h-[17px] items-center justify-center">
                <ChevronUp size={11} strokeWidth={3} className="text-[#505050]" />
              </span>
              <span className="h-[17px] bg-[#cdcdcd]" />
              <span className="flex-1" />
              <span className="flex h-[17px] items-center justify-center">
                <ChevronDown size={11} strokeWidth={3} className="text-[#505050]" />
              </span>
            </div>
          </div>
          <button className="mt-px flex h-[20px] w-[26px] items-center justify-center border border-[#adadad] bg-[#e1e1e1] font-['Liberation_Serif'] text-[14px] font-bold italic text-black">fx</button>
        </div>
        <div className="ml-[5px] mt-[7px] flex w-[453px] justify-end gap-[8px]">
          <WinBtn c="w-[103px] tracking-[-0.3px]">Query Designer...</WinBtn>
          <WinBtn c="w-[58px]">Import...</WinBtn>
          <WinBtn c="w-[87px]">Refresh Fields</WinBtn>
        </div>
        <div className="ml-[5px] mt-[12px] h-[14px] leading-[14px] tracking-[-0.6px]">Time out (in seconds):</div>
        <div className="ml-[5px] mt-[5px] flex h-[22px] w-[60px] items-center justify-between border border-[#adadad] bg-white pl-[2px] pr-px">
          0
          <span className="flex h-[18px] w-[13px] flex-col items-center gap-px">
            <span className="flex h-[8px] w-full items-center justify-center bg-[#eeeeee]">
              <span className="h-0 w-0 border-x-[3px] border-b-[3px] border-x-transparent border-b-[#222]" />
            </span>
            <span className="flex h-[8px] w-full items-center justify-center bg-[#eeeeee]">
              <Tri />
            </span>
          </span>
        </div>
        <div className="mt-auto h-px w-[515px] shrink-0 bg-[#a0a0a0]" />
      </div>
    </div>
    <div className="flex h-[36px] shrink-0 items-start pl-[7px] pr-[8px] pt-[8px]">
      <WinBtn c="w-[74px]">Help</WinBtn>
      <button className="ml-auto flex h-[21px] w-[73px] items-center justify-center border-2 border-[#0078d7] bg-[#e1e1e1]">OK</button>
      <WinBtn c="ml-[9px] w-[74px]">Cancel</WinBtn>
    </div>
  </div>
);

// ---------- taskbar ----------
const TaskIcon = ({ children, active, running = true }: { children: ReactNode; active?: boolean; running?: boolean }) => (
  <span className={"flex h-full w-[49px] shrink-0 items-center justify-center border-b-2 " + (running ? "border-[#76b9ed] " : "border-transparent ") + (active ? "bg-[#333]" : "")}>{children}</span>
);

const Taskbar = () => (
  <div className="flex h-[39px] shrink-0 items-center bg-gradient-to-r from-black via-[#050505] to-[#141a14] text-white">
    <span className="flex w-[34px] justify-center">
      <Svg>
        <path d="M0 2.500 7 1.500v6H0zM8 1.300 16 0v7.500H8zM0 8.500h7v6l-7-1zM8 8.500h8V16l-8-1.200z" fill="#fff" />
      </Svg>
    </span>
    <span className="flex w-[62px] justify-center">
      <Search size={18} strokeWidth={1.4} className="-scale-x-100 text-white" />
    </span>
    <span className="flex w-[34px] justify-center">
      <Svg w={20} h={16}>
        <path d="M4.500 1.500h11v13h-11zM2 3.500H.5v9H2M18 3.500h1.500v9H18" stroke="#fff" strokeWidth="1.200" />
      </Svg>
    </span>
    <span className="w-[9px]" />
    <TaskIcon running={false}>
      <FaInternetExplorer size={24} className="text-[#1ea3e6]" />
    </TaskIcon>
    <TaskIcon>
      <Svg w={22} h={20}>
        <path d="M1 3h7l2 2h11v14H1z" fill="#f6d25f" />
        <rect x="1" y="5" width="20" height="3" fill="#fff3c1" />
        <path d="M8 11h6v8H8z" fill="#2f9fe2" />
      </Svg>
    </TaskIcon>
    <TaskIcon>
      <Svg w={24} h={24}>
        <path d="M16 2h6v6M22 2v1M2 16v6h6M16 22h6" stroke="#35b04b" strokeWidth="2" />
        <rect x="3" y="2" width="9" height="14" rx="3" fill="#f6c644" />
        <path d="m12 12 8 9M20 12l-8 9" stroke="#2a78d6" strokeWidth="2" />
      </Svg>
    </TaskIcon>
    <TaskIcon>
      <Svg w={24} h={24}>
        <path d="M12 8c0-4 3-6 6-6s5 3 5 6-2 4-4 4h-6z" fill="#3ca8ea" />
        <path d="M2 9h13v13H2z" fill="#1675bf" />
        <path d="M3 15h3l2-3 2 6 2-3h3" stroke="#cfeaff" strokeWidth="1.200" />
        <circle cx="18" cy="18" r="4" fill="#1f90d8" stroke="#0a5c99" />
      </Svg>
    </TaskIcon>
    <TaskIcon>
      <Svg w={20} h={26}>
        <path d="M1 1h12l6 6v18H1z" fill="#fff" stroke="#23b24b" strokeWidth="2" />
        <path d="M13 1l6 6h-6z" fill="#23b24b" />
        <path d="M4 12h12v9H4z" fill="#23b24b" />
        <path d="M4 15h12M4 18h12M8 12v9M12 12v9" stroke="#fff" />
      </Svg>
    </TaskIcon>
    <TaskIcon>
      <Svg w={24} h={26}>
        <rect x="2" y="2" width="17" height="23" fill="#c9e9a5" stroke="#4a8a35" />
        <rect x="2" y="2" width="17" height="5" fill="#e8e8e8" />
        <path d="M6 10v9M9 10v5" stroke="#333" strokeWidth="1.500" />
        <path d="M12 22 22 3" stroke="#f0a020" strokeWidth="3" />
      </Svg>
    </TaskIcon>
    <TaskIcon>
      <Svg w={22} h={24}>
        <path d="M6 1h15l-4 21H1z" fill="#9fd0e8" stroke="#64a3c2" />
        <path d="M6 1 1 22l3 1 5-20z" fill="#5d99b8" />
        <path d="M12 4h6l-2 14h-6z" fill="#d5edf8" />
      </Svg>
    </TaskIcon>
    <TaskIcon active>
      <Svg w={26} h={22}>
        <circle cx="8" cy="9" r="6" fill="#f0b429" />
        <circle cx="17" cy="9" r="6" fill="#2f9fe2" />
        <path d="M5 14 19 3l2 2L8 16z" fill="#e4512f" />
        <rect x="16" y="13" width="8" height="9" fill="#e6e6e6" stroke="#888" />
      </Svg>
    </TaskIcon>
    <span className="w-[3px]" />
    <TaskIcon>
      <Svg w={28} h={24}>
        <circle cx="13" cy="11" r="7" fill="#8f9fd8" />
        <circle cx="18" cy="18" r="6" fill="#14146a" />
        <path d="M21 2l-4 6M3 8l5 3M22 8l4-2" stroke="#e6e9f5" strokeWidth="2" />
      </Svg>
    </TaskIcon>
    <div className="ml-auto flex items-center pr-[5px] text-[12px] text-[#e8e8e8]">
      <ChevronUp size={17} strokeWidth={1.3} />
      <span className="ml-[20px]">
        <Svg w={18} h={17}>
          <rect x=".5" y="1.500" width="15" height="9" stroke="#fff" />
          <rect x="3.500" y="3.500" width="3" height="3" stroke="#fff" />
          <path d="M4 11v3h4" stroke="#fff" />
          <path d="M13 8l5 9H8z" fill="#f6c52a" />
        </Svg>
      </span>
      <span className="ml-[16px]">
        <Svg w={18} h={14}>
          <path d="M1 5h3l4-4v12L4 9H1z" stroke="#e8e8e8" />
          <path d="m12 5 4 4M16 5l-4 4" stroke="#e8e8e8" />
        </Svg>
      </span>
      <span className="ml-[14px]">
        <Svg w={24} h={14}>
          <rect x=".5" y="1.500" width="22" height="11" stroke="#fff" />
          <path d="M3 5h17M3 7.500h17" stroke="#fff" strokeDasharray="1 1" />
          <path d="M6 10h11" stroke="#fff" />
        </Svg>
      </span>
      <span className="ml-[14px] w-[18px] text-center">ESP</span>
      <span className="ml-[15px] flex w-[60px] flex-col items-center leading-[18px]">
        <span>12:19 PM</span>
        <span>3/26/2024</span>
      </span>
      <span className="ml-[20px]">
        <Svg w={16} h={15}>
          <path d="M.5.500h15v10H8l-3 3v-3H.5z" stroke="#fff" />
        </Svg>
      </span>
      <span className="ml-[13px] h-[39px] w-px bg-[#555]" />
    </div>
  </div>
);

// ---------- app ----------
export default function App() {
  return (
    <div className={"relative flex h-[983px] w-[1913px] flex-col overflow-hidden bg-[#f2f5fb] text-black " + ui}>
      <div className="flex h-[24px] shrink-0 items-center bg-white text-[12px] tracking-[-0.15px] text-[#6f6f6f]">
        <Svg w={14} h={16} c="-ml-[2px] mr-[4px]">
          <path d="M0 8 7 1l7 7" fill="#e2a322" stroke="#b03a2e" strokeWidth="1.500" />
          <rect x="6" y="7" width="7" height="8" fill="#fff" stroke="#555" />
        </Svg>
        ARI-IDAAN GESTION BI Project - Microsoft Visual Studio
        <span className="ml-auto flex items-center gap-[34px] pr-[18px]">
          <span className="h-px w-[11px] bg-[#777]" />
          <Svg w={11} h={11}>
            <path d="M.5 2.500h8v8h-8zM2.500 2.500v-2h8v8h-2" stroke="#777" />
          </Svg>
          <X size={13} strokeWidth={1} className="text-[#666]" />
        </span>
      </div>

      <div className="flex min-h-0 flex-1 flex-col bg-gradient-to-r from-[#e8ecf9] to-[#f5f7fc]">
        <div className="flex h-[26px] shrink-0 items-center gap-[15.750px] pl-[6px] text-[12px] text-black">
          {["File", "Edit", "View", "Project", "Build", "Debug", "Tools", "Window", "Help"].map((m) => (
            <span key={m}>{m}</span>
          ))}
        </div>

        <div className="flex h-[25px] shrink-0">
          <Band w="w-[524px]">
            <span className="w-[1px]" />
            <Grip />
            <Btn w="w-[16px]">
              <NewProj />
            </Btn>
            <Btn w="w-[14px]">
              <Tri />
            </Btn>
            <Btn w="w-[19px]">
              <Save />
            </Btn>
            <Btn>
              <SaveAll />
            </Btn>
            <Sep />
            <Btn>
              <Cut />
            </Btn>
            <Btn>
              <Copy />
            </Btn>
            <Btn>
              <Paste />
            </Btn>
            <Sep />
            <span className="w-[5px] shrink-0" />
            <Btn w="w-[21px]">
              <Undo />
            </Btn>
            <Btn w="w-[12px]">
              <Tri c="border-t-[#aaa]" />
            </Btn>
            <Btn w="w-[20px]">
              <Undo flip />
            </Btn>
            <Btn w="w-[12px]">
              <Tri c="border-t-[#aaa]" />
            </Btn>
            <Sep />
            <span className="w-[2px] shrink-0" />
            <Btn w="w-[22px]">
              <span className="h-0 w-0 border-y-[6px] border-l-[9px] border-y-transparent border-l-[#2f8a2f]" />
            </Btn>
            <Sep />
            <span className="flex h-[20px] w-[87px] shrink-0 items-center justify-between bg-white pl-[2px] text-[12px]">
              CC
              <span className="flex h-full w-[11px] items-center justify-center bg-[#eef0f6]">
                <Tri />
              </span>
            </span>
            <Sep />
            <Btn>
              <Find v={0} />
            </Btn>
            <Btn>
              <Find v={1} />
            </Btn>
            <Btn>
              <Find v={2} />
            </Btn>
            <Btn>
              <Tools />
            </Btn>
            <Btn>
              <Attach />
            </Btn>
            <Btn>
              <Cmd />
            </Btn>
            <Btn w="w-[10px]">
              <Tri />
            </Btn>
            <Overflow />
          </Band>
        </div>

        <div className="mt-px flex h-[25px] shrink-0 gap-[5px]">
          <Band w="w-[270px]">
            <span className="w-[4px]" />
            <Combo text="Solid" w="w-[83px]" />
            <span className="w-[2px]" />
            <Combo text="1 pt" w="w-[63px]" />
            <span className="w-[2px]" />
            <Combo text="Black" w="w-[68px]" />
            <Btn w="w-[22px]">
              <Svg>
                <rect x="1.500" y="1.500" width="13" height="13" stroke="#b8bcc6" strokeDasharray="1 1" />
                <path d="M8 2v12M2 8h12" stroke="#c5c9d2" strokeDasharray="1 1" />
              </Svg>
            </Btn>
            <Btn w="w-[12px]">
              <Tri c="border-t-[#aaa]" />
            </Btn>
            <Overflow />
          </Band>
          <Band w="w-[473px]">
            <Grip />
            <Combo text="Arial" w="w-[133px]" />
            <span className="w-[2px]" />
            <Combo text="9pt" w="w-[43px]" />
            <span className="w-[1px]" />
            {["B", "I", "U"].map((t, i) => (
              <Btn key={t}>
                <span className={"font-['Liberation_Serif'] text-[14px] font-bold text-[#8d94a3] " + (i === 1 ? "italic" : i === 2 ? "underline" : "")}>{t}</span>
              </Btn>
            ))}
            <G n="fontA" />
            <G n="eraser" />
            <G n="aLeft" />
            <G n="aCenter" />
            <G n="aRight" />
            <G n="ulist1" />
            <G n="ulist2" />
            <G n="outdent" />
            <G n="indent" />
            <Overflow />
          </Band>
          <Band w="w-[647px]">
            <Grip />
            <G n="grid" />
            <Sep />
            <G n="left" />
            <G n="center" />
            <G n="right" />
            <Sep />
            <G n="top" />
            <G n="middle" />
            <G n="bottom" />
            <Sep />
            <G n="w1" />
            <G n="w2" />
            <G n="w3" />
            <G n="w4" />
            <Sep />
            <G n="h1" />
            <G n="h2" />
            <G n="h3" />
            <G n="h4" />
            <Sep />
            <G n="v1" />
            <G n="v2" />
            <G n="v3" />
            <G n="v4" />
            <Sep />
            <G n="cw" />
            <G n="cv" />
            <Sep />
            <G n="front" />
            <G n="back" />
            <Sep />
            <G n="table" />
            <Sep />
            <G n="tabs" />
            <Overflow />
          </Band>
          <Band w="w-[270px]">
            <Grip />
            <G n="doc" />
            <G n="doc" />
            <G n="house" />
            <G n="bracket" />
            <G n="ruler" />
            <Combo text="100%" w="w-[133px]" />
            <Overflow />
          </Band>
        </div>

        <div className="flex min-h-0 flex-1 pt-[2px]">
          <div className="flex w-[133px] shrink-0 flex-col">
            <div className="flex h-[795px] shrink-0">
              <div className="flex h-[70px] w-[14px] shrink-0 flex-col items-center gap-[3px] overflow-hidden border-r border-[#d4d7df] bg-[#f5f5f5] pt-[6px] text-[12px] text-[#555]">
                <Tools />
                <span className="[writing-mode:vertical-rl]">Toolbox</span>
              </div>
              <span className="w-[2px] shrink-0" />
              <ReportData />
            </div>
            <div className="ml-[18px] mt-[3px] flex h-[21px] w-[71px] items-center gap-[3px] whitespace-nowrap border border-t-0 border-[#d7dbe4] bg-[#eef1f8] pl-[3px] text-[12px] text-[#666]">
              <Svg>
                <rect x="2" y="2" width="10" height="12" fill="#fff" stroke="#8a8a8a" />
                <circle cx="11" cy="12" r="4" fill="#e8412f" />
                <path d="m9.500 10.500 3 3M12.500 10.500l-3 3" stroke="#fff" />
              </Svg>
              Error List
            </div>
          </div>
          <div className="flex w-[1340px] shrink-0 flex-col">
            <DocumentArea />
            <OutputPanel />
          </div>
          <SolutionExplorer />
        </div>
      </div>

      <div className="flex h-[23px] shrink-0 items-center border-t border-[#d5d5d5] bg-[#efefef] pl-[2px] text-[12px] text-black">Ready</div>
      <Taskbar />
      <Dialog />
    </div>
  );
}
